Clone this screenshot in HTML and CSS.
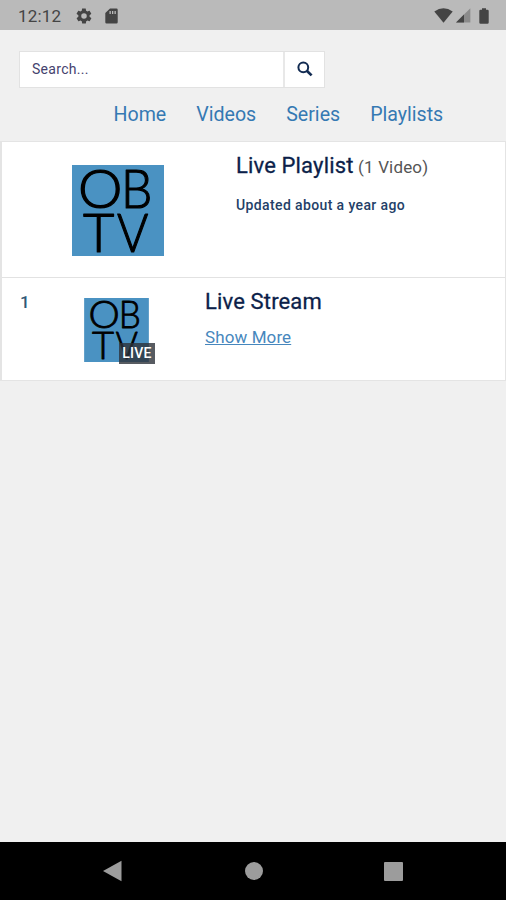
FILE: index.html
```
<!DOCTYPE html>
<html lang="en">
<head>
    <meta charset="UTF-8">
    <meta name="viewport" content="width=device-width, initial-scale=1.0">
    <title>Live Playlist - OBTV</title>
    <link rel="stylesheet" href="styles.css">
</head>
<body>
    <div class="status-bar">
        <span class="clock">12:12</span>
        <svg class="icon-gear" width="18" height="18" viewBox="0 0 24 24"><path fill="#444" fill-rule="evenodd" d="M19.4 13a7.500 7.500 0 0 0 0-2l2.100-1.600c.2-.2.300-.4.100-.700l-2-3.400c-.1-.2-.4-.3-.6-.2l-2.500 1a7.300 7.300 0 0 0-1.700-1l-.4-2.600c0-.3-.2-.5-.5-.5h-4c-.2 0-.5.2-.5.400L9 5.100c-.6.200-1.200.6-1.700 1l-2.500-1c-.2-.1-.5 0-.6.200l-2 3.400c-.1.300-.1.500.1.700L4.500 11a7.500 7.500 0 0 0 0 2l-2.100 1.600c-.2.200-.3.400-.1.700l2 3.400c.1.200.4.300.6.200l2.500-1c.5.400 1.100.8 1.700 1l.4 2.600c0 .3.200.5.500.5h4c.2 0 .5-.2.500-.4l.4-2.700c.6-.2 1.200-.6 1.700-1l2.500 1c.2.100.5 0 .6-.2l2-3.400c.1-.3.100-.5-.1-.7zM12 15.700a3.700 3.700 0 1 1 0-7.400 3.700 3.700 0 0 1 0 7.400z"/></svg>
        <svg class="icon-card" width="13" height="16" viewBox="0 0 13 16"><path fill="#444" fill-rule="evenodd" d="M5 .5h6.500q1.200 0 1.200 1.200v12.600q0 1.200-1.200 1.200h-10q-1.200 0-1.200-1.200V5zM4.500 3v3h1.300V3zM7 3v3h1.300V3zM9.500 3v3h1.300V3z"/></svg>
        <div class="status-right">
            <svg width="19" height="15" viewBox="0 0 19 15"><path fill="#444" d="M.3 3.500Q9.500-3 18.700 3.500L9.500 14.700z"/></svg>
            <svg class="icon-signal" width="15" height="15" viewBox="0 0 15 15"><path fill="#8b8b8b" d="M0 14.500L14.300.3v14.200z"/><path fill="#444" d="M0 14.500L8 6.500v8z"/></svg>
            <svg class="icon-battery" width="10" height="16" viewBox="0 0 10 16"><path fill="#444" d="M3 .3h4v1.500h1.500q1.200 0 1.200 1.200v11.500q0 1.200-1.200 1.200h-7Q.3 15.700.3 14.500V3q0-1.200 1.200-1.200H3z"/></svg>
        </div>
    </div>

    <div class="page">
        <form class="search">
            <input type="text" class="search-input" placeholder="Search...">
            <button type="button" class="search-btn" aria-label="Search">
                <svg width="16" height="16" viewBox="0 0 16 16" fill="none" stroke="#122b52"><circle cx="6.300" cy="6.300" r="4.900" stroke-width="2"/><path d="M9.800 9.800L14.600 14.400" stroke-width="2.700"/></svg>
            </button>
        </form>

        <nav class="nav">
            <a href="#">Home</a>
            <a href="#">Videos</a>
            <a href="#">Series</a>
            <a href="#">Playlists</a>
        </nav>

        <div class="playlist">
            <div class="playlist-header">
                <div class="playlist-art">
                    <svg class="logo" viewBox="0 0 91 90"><rect width="91" height="90" fill="#4a92c2"/><g class="logo-text"><text x="6" y="42.500" textLength="44" lengthAdjust="spacingAndGlyphs">O</text><text x="48.500" y="42.500" textLength="31" lengthAdjust="spacingAndGlyphs">B</text><text x="11" y="86" textLength="31" lengthAdjust="spacingAndGlyphs">T</text><text x="44.500" y="86" textLength="31" lengthAdjust="spacingAndGlyphs">V</text></g></svg>
                </div>
                <div class="playlist-info">
                    <h1 class="playlist-title">Live Playlist <small>(1 Video)</small></h1>
                    <p class="updated">Updated about a year ago</p>
                </div>
            </div>
            <div class="video">
                <span class="video-number">1</span>
                <div class="video-thumb">
                    <svg class="logo" viewBox="0 0 91 90"><rect width="91" height="90" fill="#4a92c2"/><g class="logo-text"><text x="6" y="42.500" textLength="44" lengthAdjust="spacingAndGlyphs">O</text><text x="48.500" y="42.500" textLength="31" lengthAdjust="spacingAndGlyphs">B</text><text x="11" y="86" textLength="31" lengthAdjust="spacingAndGlyphs">T</text><text x="44.500" y="86" textLength="31" lengthAdjust="spacingAndGlyphs">V</text></g></svg>
                    <span class="live-badge">LIVE</span>
                </div>
                <div class="video-info">
                    <h2 class="video-title">Live Stream</h2>
                    <a href="#" class="show-more">Show More</a>
                </div>
            </div>
        </div>
    </div>

    <div class="android-nav">
        <svg width="20" height="22" viewBox="0 0 20 22"><path fill="#9c9c9c" d="M0 11L18.500.800v20.400z"/></svg>
        <span class="android-home"></span>
        <span class="android-recent"></span>
    </div>
</body>
</html>
```
FILE: styles.css
```
* {
    margin: 0;
    padding: 0;
    box-sizing: border-box;
}

body {
    display: flex;
    flex-direction: column;
    height: 900px;
    font-family: Roboto, "Liberation Sans", sans-serif;
    background: #f0f0f0;
    color: #0c1f4a;
    overflow: hidden;
}

svg {
    display: block;
}

.status-bar {
    display: flex;
    align-items: center;
    height: 30px;
    padding: 1px 16px 0 18px;
    background: #bababa;
}

.clock {
    width: 44px;
    font-size: 17px;
    letter-spacing: 0.2px;
    color: #444;
}

.icon-gear {
    margin-left: 13px;
}

.icon-card {
    margin-left: 12px;
}

.status-right {
    display: flex;
    align-items: center;
    margin-left: auto;
}

.icon-signal {
    margin-left: 3px;
}

.icon-battery {
    margin-left: 8px;
    margin-right: 1px;
}

.page {
    flex: 1;
    padding-top: 21px;
}

.search {
    display: flex;
    width: 306px;
    height: 37px;
    margin-left: 19px;
    border: 1px solid #e2e2e2;
    background: #fff;
}

.search-input {
    flex: 1;
    min-width: 0;
    padding: 0 12px 1px;
    border: none;
    font-family: inherit;
    font-size: 14px;
    letter-spacing: 0.3px;
    background: #fff;
}

.search-input::placeholder {
    color: #45426e;
}

.search-btn {
    display: flex;
    align-items: center;
    justify-content: center;
    width: 41px;
    padding: 0 0 2px 0;
    border: none;
    border-left: 2px solid #e8e8e8;
    background: #fff;
}

.nav {
    display: flex;
    gap: 30px;
    margin: 13px 0 0 113.5px;
    height: 40px;
    line-height: 28px;
}

.nav a {
    font-size: 19.6px;
    color: #3579b3;
    text-decoration: none;
}

.playlist {
    border: 1px solid #e4e4e4;
    border-left-width: 2px;
    background: #fff;
}

.playlist-header {
    display: flex;
    height: 136px;
    border-bottom: 1px solid #e2e2e2;
}

.playlist-art {
    width: 234px;
    padding: 23px 0 0 70px;
}

.playlist-art .logo {
    width: 92px;
    height: 91px;
}

.logo-text {
    font-family: Lato, sans-serif;
    font-size: 52.5px;
    font-weight: 300;
    stroke: #000;
    stroke-width: 1.2px;
    stroke-linejoin: round;
}

.playlist-title {
    margin-top: 9px;
    font-size: 22px;
    font-weight: 400;
    line-height: 30px;
    letter-spacing: 0.15px;
    white-space: nowrap;
    -webkit-text-stroke: 0.3px #0c1f4a;
}

.playlist-title small {
    margin-left: -1px;
    font-size: 17px;
    font-weight: 400;
    color: #555;
    -webkit-text-stroke: 0;
}

.updated {
    margin-top: 13px;
    font-size: 14px;
    font-weight: 500;
    line-height: 20px;
    letter-spacing: 0.38px;
    color: #243f68;
}

.video {
    display: flex;
    height: 102px;
}

.video-number {
    width: 82px;
    padding: 14px 0 0 18px;
    font-size: 17px;
    font-weight: 500;
    line-height: 20px;
    color: #315777;
}

.video-thumb {
    position: relative;
    width: 121px;
    padding-top: 20px;
}

.video-thumb .logo {
    width: 65px;
    height: 64px;
}

.live-badge {
    position: absolute;
    left: 35px;
    top: 65px;
    width: 36px;
    height: 21px;
    font-size: 14px;
    font-weight: 500;
    line-height: 21px;
    letter-spacing: 0.2px;
    text-align: center;
    color: #fff;
    background: rgba(45, 50, 58, 0.8);
}

.video-title {
    margin-top: 9px;
    font-size: 22px;
    font-weight: 400;
    line-height: 30px;
    letter-spacing: 0.15px;
    -webkit-text-stroke: 0.3px #0c1f4a;
}

.show-more {
    display: block;
    margin-top: 9px;
    font-size: 17px;
    line-height: 22px;
    letter-spacing: 0.1px;
    color: #4787bd;
}

.android-nav {
    display: flex;
    align-items: center;
    justify-content: space-between;
    height: 58px;
    padding: 0 103px;
    background: #000;
}

.android-home {
    width: 18px;
    height: 18px;
    border-radius: 50%;
    background: #9c9c9c;
}

.android-recent {
    width: 19px;
    height: 19px;
    border-radius: 1px;
    background: #9c9c9c;
}
```
